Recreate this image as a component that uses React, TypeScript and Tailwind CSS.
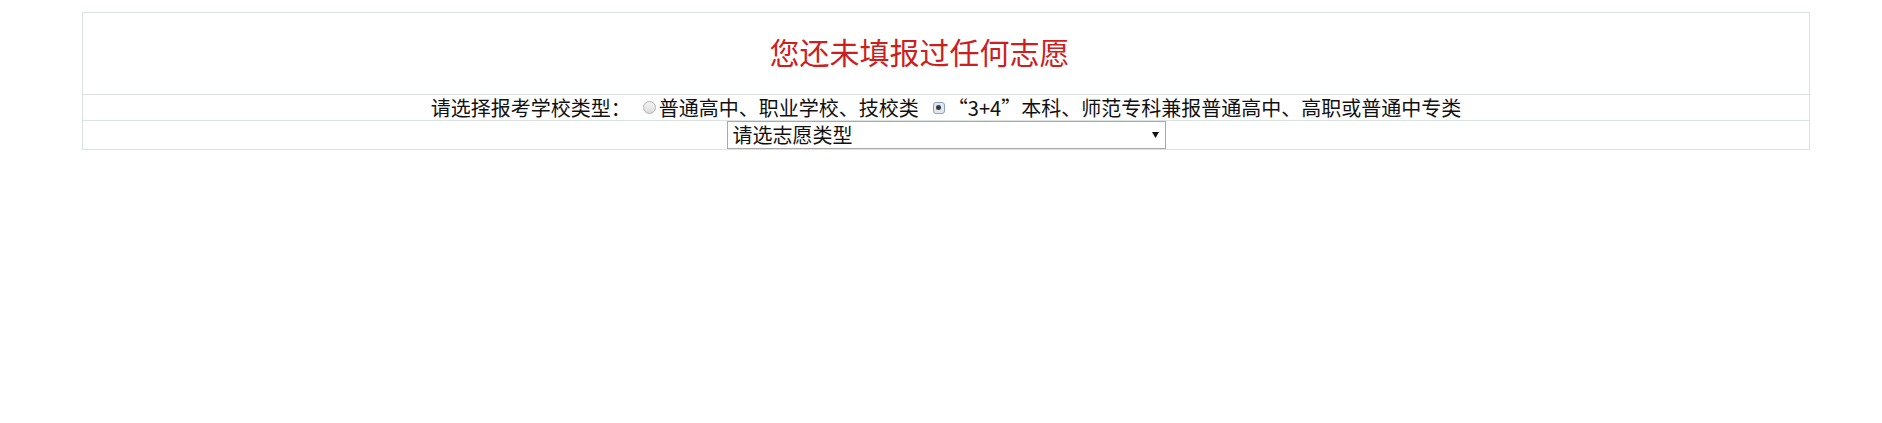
import React from "react";

const font = { fontFamily: '"Noto Sans CJK SC", "Liberation Serif", sans-serif' };

export default function App() {
  return (
    <div className="w-[1882px] h-[423px] bg-white pt-[12px]" style={font}>
      <div className="ml-[82px] w-[1728px] border border-[#dbe2e2] text-[#111]">
        <div className="h-[82px] flex items-center justify-center border-b border-[#dbe2e2] pb-[6px]">
          <span className="mr-[53px] text-[30px] leading-none text-[#cc1f1f]">您还未填报过任何志愿</span>
        </div>
        <div className="h-[26px] flex items-center justify-center border-b border-[#dbe2e2] text-[20px] leading-[26px]">
          <span>请选择报考学校类型：</span>
          <span className="ml-[12px] w-[13px] h-[13px] rounded-full border border-[#b4b4b4] bg-gradient-to-b from-[#f4f4f4] to-[#dcdcdc]" />
          <span className="ml-[3px]">普通高中、职业学校、技校类</span>
          <span className="ml-[14px] w-[12px] h-[12px] rounded-[3px] border border-[#8aa4c4] bg-[#dfe6ef] flex items-center justify-center">
            <span className="w-[5px] h-[5px] rounded-full bg-[#3a3a3a]" />
          </span>
          <span className="ml-[3px]">“3+4”本科、师范专科兼报普通高中、高职或普通中专类</span>
        </div>
        <div className="h-[28px] flex items-center justify-center">
          <div className="w-[439px] h-[28px] border border-[#a9a9a9] bg-white flex items-center justify-between pl-[5px] pr-[6px] text-[20px] leading-none">
            <span>请选志愿类型</span>
            <svg width="7" height="6" viewBox="0 0 7 6">
              <path d="M0 0 H7 L3.5 6 Z" fill="#111" />
            </svg>
          </div>
        </div>
      </div>
    </div>
  );
}
